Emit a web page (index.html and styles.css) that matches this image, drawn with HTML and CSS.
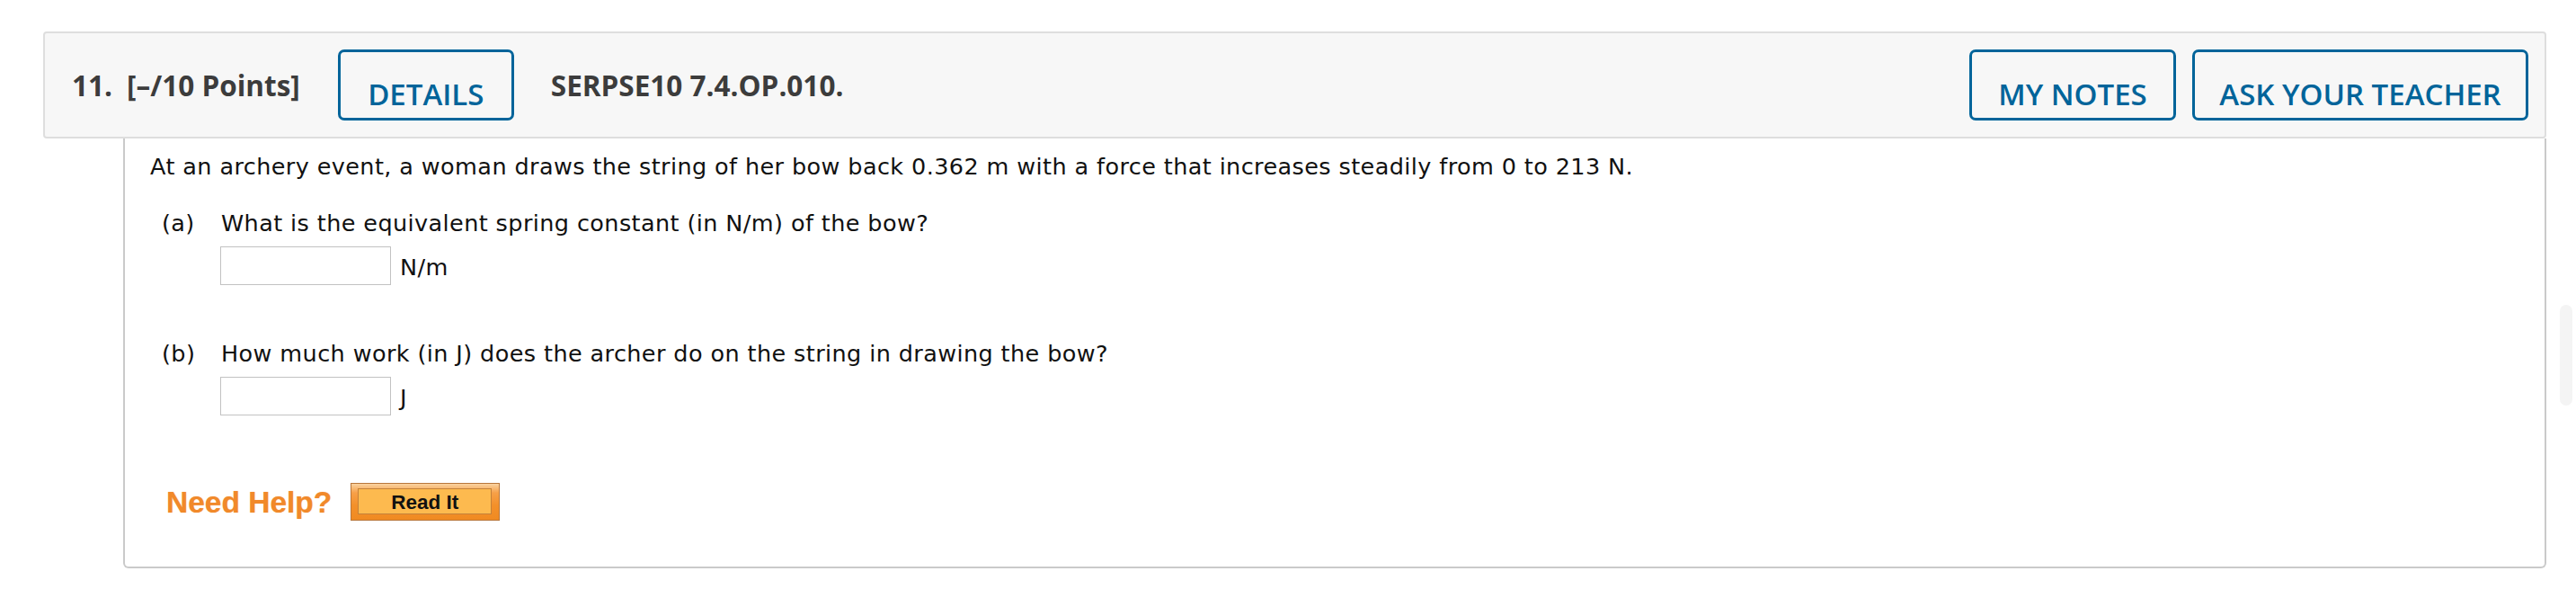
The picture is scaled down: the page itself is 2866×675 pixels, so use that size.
FILE: index.html
```html
<!DOCTYPE html>
<html lang="en">
<head>
<meta charset="utf-8">
<title>Question 11</title>
<link rel="stylesheet" href="styles.css">
</head>
<body>
<div class="page">
  <div class="qhead">
    <span class="qnum">11.</span>
    <span class="qpts">[–/10 Points]</span>
    <button class="btn btn-details">DETAILS</button>
    <span class="qid">SERPSE10 7.4.OP.010.</span>
    <span class="spacer"></span>
    <button class="btn btn-notes">MY NOTES</button>
    <button class="btn btn-ask">ASK YOUR TEACHER</button>
  </div>
  <div class="qbody">
    <p class="stem">At an archery event, a woman draws the string of her bow back 0.362 m with a force that increases steadily from 0 to 213 N.</p>
    <div class="part part-a">
      <div class="plabel">(a)</div>
      <div class="pmain">
        <div class="ptext">What is the equivalent spring constant (in N/m) of the bow?</div>
        <div class="answer"><span class="inp"></span><span class="unit">N/m</span></div>
      </div>
    </div>
    <div class="part part-b">
      <div class="plabel">(b)</div>
      <div class="pmain">
        <div class="ptext">How much work (in J) does the archer do on the string in drawing the bow?</div>
        <div class="answer"><span class="inp"></span><span class="unit">J</span></div>
      </div>
    </div>
    <div class="help">
      <span class="needhelp">Need Help?</span>
      <span class="readit"><span class="readit-inner">Read It</span></span>
    </div>
  </div>
</div>
<div class="scrollbar"></div>
</body>
</html>
```
FILE: styles.css
```css
html, body {
  margin: 0;
  padding: 0;
  background: #ffffff;
}

.page {
  padding: 35px 33px 0 48px;
}

.qhead {
  box-sizing: border-box;
  height: 119px;
  display: flex;
  align-items: center;
  padding: 0 18px 0 30px;
  background: #f7f7f7;
  border: 2px solid #dedede;
  border-radius: 4px;
  font-family: "Open Sans", "Liberation Sans", sans-serif;
  color: #3c3c3c;
}

.qnum,
.qpts,
.qid {
  font-size: 31.5px;
  font-weight: 700;
  line-height: 32px;
  white-space: nowrap;
}

.qpts {
  margin-left: 16px;
}

.qid {
  margin-left: 41px;
}

.spacer {
  flex: 1;
}

.btn {
  box-sizing: border-box;
  height: 79px;
  padding: 30px 33px 0;
  margin: 0;
  background: transparent;
  border: 3px solid #00649a;
  border-radius: 7px;
  color: #00649a;
  font-family: "Open Sans", "Liberation Sans", sans-serif;
  font-size: 33px;
  font-weight: 600;
  line-height: 33px;
  white-space: nowrap;
  display: flex;
  align-items: flex-start;
  justify-content: center;
}

.btn-details {
  margin-left: 42px;
  width: 196px;
}

.btn-notes {
  width: 230px;
}

.btn-ask {
  width: 374px;
  margin-left: 18px;
}

.qbody {
  margin-left: 89px;
  border: 2px solid #cacaca;
  border-top: none;
  border-radius: 0 0 6px 6px;
  padding: 16px 28px 51px;
  font-family: "DejaVu Sans", Verdana, sans-serif;
  font-size: 25.5px;
  letter-spacing: 0.4px;
  line-height: 30px;
  color: #111111;
}

.stem {
  margin: 0;
}

.part {
  display: flex;
  margin-top: 33px;
}

.part-b {
  margin-top: 61px;
}

.plabel {
  width: 66px;
  padding-left: 13px;
  flex: none;
}

.answer {
  display: flex;
  align-items: center;
  margin-top: 11px;
}

.inp {
  box-sizing: border-box;
  width: 190px;
  height: 43px;
  margin-left: -1px;
  border: 1px solid #c2c2c2;
  background: #ffffff;
}

.unit {
  margin-left: 10px;
  padding-top: 3px;
}

.help {
  display: flex;
  align-items: center;
  margin-top: 75px;
  padding-left: 18px;
  letter-spacing: 0;
}

.needhelp {
  font-family: "Liberation Sans", Arial, sans-serif;
  font-weight: 700;
  font-size: 33.5px;
  line-height: 33px;
  color: #f1892a;
  text-shadow: 0 0 1px rgba(241, 137, 42, 0.6);
}

.readit {
  box-sizing: border-box;
  width: 166px;
  height: 42px;
  margin-left: 21px;
  padding: 5px 8px 6px 7px;
  border: 1px solid #b8763a;
  background: linear-gradient(#f9d2a0 0%, #f7a048 25%, #f3902a 60%, #f08a22 100%);
  display: flex;
}

.readit-inner {
  flex: 1;
  border: 1px solid #c4813a;
  background: #fdba4f;
  font-family: "Liberation Sans", Arial, sans-serif;
  font-weight: 700;
  font-size: 22.5px;
  line-height: 26px;
  color: #111111;
  text-align: center;
  padding-top: 2px;
  box-sizing: border-box;
}

.scrollbar {
  position: fixed;
  top: 339px;
  right: 4px;
  width: 14px;
  height: 112px;
  border-radius: 7px;
  background: #f4f4f4;
}
```
